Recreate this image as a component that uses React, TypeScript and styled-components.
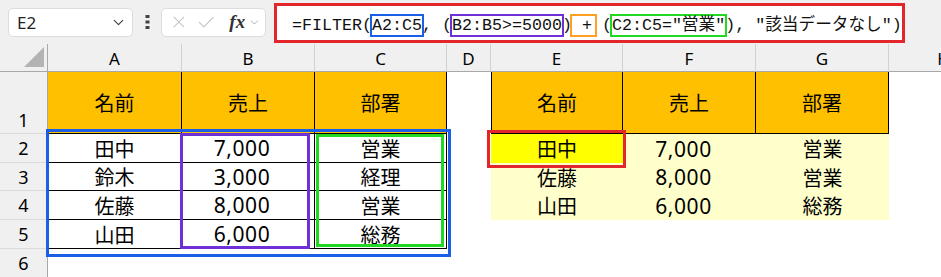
import styled, { createGlobalStyle } from "styled-components";
import { X, Check, ChevronDown } from "lucide-react";

const GlobalStyle = createGlobalStyle`
  body {
    margin: 0;
    background: #ffffff;
    overflow: hidden;
  }
  * {
    box-sizing: border-box;
  }
`;

const COLS = ["A", "B", "C", "D", "E", "F", "G", "H"];
const COL_W = [134, 133, 132, 44, 132, 133, 133, 110];
const ROW_H = [62, 29, 28, 29, 29, 29];

type CellData = {
    text?: string
    fill?: string
    border?: boolean
    left?: boolean
    num?: boolean
};

const ORANGE = "#ffc000";
const CREAM = "#ffffcc";
const YELLOW = "#ffff00";

const head = (t: string, left = false): CellData => ({ text: t, fill: ORANGE, border: true, left });
const body = (t: string, num = false): CellData => ({ text: t, border: true, num });
const out = (t: string, num = false, fill = CREAM): CellData => ({ text: t, fill, num });

// rows 1..6, columns A..H
const SHEET: CellData[][] = [
    [head("名前"), head("売上"), head("部署"), {}, head("名前", true), head("売上"), head("部署"), {}],
    [body("田中"), body("7,000", true), body("営業"), {}, out("田中", false, YELLOW), out("7,000", true), out("営業"), {}],
    [body("鈴木"), body("3,000", true), body("経理"), {}, out("佐藤"), out("8,000", true), out("営業"), {}],
    [body("佐藤"), body("8,000", true), body("営業"), {}, out("山田"), out("6,000", true), out("総務"), {}],
    [body("山田"), body("6,000", true), body("総務"), {}, {}, {}, {}, {}],
    [{}, {}, {}, {}, {}, {}, {}, {}],
];

export default function App() {
    return (
        <Page>
            <GlobalStyle />
            <Toolbar>
                <NameBox>
                    <span>E2</span>
                    <ChevronDown size={17} strokeWidth={1.6} color="#3a3a3a" />
                </NameBox>
                <Dots>
                    <svg width="5" height="16" viewBox="0 0 5 16">
                        <rect x="0.5" y="1" width="4" height="3" fill="#444" />
                        <rect x="0.5" y="6.5" width="4" height="3" fill="#444" />
                        <rect x="0.5" y="12" width="4" height="3" fill="#444" />
                    </svg>
                </Dots>
                <FxBox>
                    <X size={20} strokeWidth={1.3} color="#c4c4c4" />
                    <Check size={21} strokeWidth={1.3} color="#c4c4c4" />
                    <Fx>fx</Fx>
                    <ChevronDown size={13} strokeWidth={1.5} color="#9a9a9a" />
                </FxBox>
                <FormulaBox>
                    <Formula>
                        =FILTER(<Ref $color="#1a5fe6">A2:C5</Ref>, (<Ref $color="#7030d8">B2:B5&gt;=5000</Ref>)<Plus> +</Plus> (<Ref $color="#22d822">C2:C5="営業"</Ref>), "該当データなし")
                    </Formula>
                </FormulaBox>
            </Toolbar>

            <SheetWrap>
                <Grid>
                    <Corner>
                        <svg width="22" height="22" viewBox="0 0 22 22">
                            <polygon points="21,1 21,21 1,21" fill="#b3b3b3" />
                        </svg>
                    </Corner>
                    {COLS.map((c) => (
                        <ColHead key={c}>{c}</ColHead>
                    ))}
                    {SHEET.map((row, r) => (
                        <RowFrag key={r} row={row} n={r + 1} />
                    ))}
                </Grid>

                <Outline $color="#1a5fe6" $x={46} $y={85} $w={405} $h={128} />
                <Outline $color="#7030d8" $x={180} $y={89} $w={130} $h={116} />
                <Outline $color="#22d822" $x={316} $y={90} $w={128} $h={113} />
                <Outline $color="#e3262c" $x={487} $y={86} $w={139} $h={38} />
            </SheetWrap>
        </Page>
    )
}

function RowFrag({ row, n }: { row: CellData[]; n: number }) {
    return (
        <>
            <RowHead $bottom={n === 1}>{n}</RowHead>
            {row.map((c, i) => (
                <Cell key={i} $fill={c.fill} $border={c.border} $left={c.left} $num={c.num}>
                    {c.text}
                </Cell>
            ))}
        </>
    )
}

const Page = styled.div`
    width: 941px;
    height: 277px;
    overflow: hidden;
    background: #ffffff;
    font-family: "Noto Sans", "Noto Sans CJK JP", sans-serif;
    color: #000;
`

const Toolbar = styled.div`
    height: 44px;
    background: #f0f0f0;
    display: flex;
    align-items: center;
    padding-left: 8px;
`

const NameBox = styled.div`
    width: 125px;
    height: 29px;
    background: #ffffff;
    border: 1px solid #dcdcdc;
    border-radius: 5px;
    display: flex;
    align-items: center;
    justify-content: space-between;
    padding: 0 5px 0 8px;
    font-family: "Noto Sans", sans-serif;
    font-size: 17px;
    color: #222;
`

const Dots = styled.div`
    width: 28px;
    display: flex;
    justify-content: center;
    align-items: center;
`

const FxBox = styled.div`
    width: 105px;
    height: 29px;
    background: #ffffff;
    border: 1px solid #dcdcdc;
    border-radius: 5px;
    display: flex;
    align-items: center;
    gap: 7px;
    padding: 0 4px 0 7px;
`

const Fx = styled.span`
    font-family: "Liberation Serif", serif;
    font-style: italic;
    font-weight: bold;
    font-size: 19px;
    color: #333;
    margin-left: 6px;
    margin-right: -4px;
`

const FormulaBox = styled.div`
    margin-left: 8px;
    margin-top: 2px;
    width: 631px;
    height: 40px;
    background: #ffffff;
    border: 3px solid #e3262c;
    display: flex;
    align-items: center;
    padding-left: 15px;
`

const Formula = styled.div`
    font-family: "Liberation Mono", "Noto Sans CJK JP", monospace;
    font-size: 16.67px;
    color: #111;
    white-space: pre;
`

const Ref = styled.span<{ $color: string }>`
    border: 2px solid ${(p) => p.$color};
    margin: 0 -2px;
`

const Plus = styled.span`
    border: 2px solid #ffa020;
    margin: 0 -5px 0 -2px;
    padding-right: 3px;
`

const SheetWrap = styled.div`
    position: relative;
`

const Grid = styled.div`
    display: grid;
    grid-template-columns: 48px ${COL_W.map((w) => `${w}px`).join(" ")};
    grid-template-rows: 28px ${ROW_H.map((h) => `${h}px`).join(" ")};
`

const Corner = styled.div`
    background: #f0f0f0;
    border-right: 1px solid #a8a8a8;
    border-bottom: 1px solid #a8a8a8;
    display: flex;
    justify-content: flex-end;
    align-items: flex-end;
    padding: 0 2px 3px 0;
`

const ColHead = styled.div`
    background: #f0f0f0;
    border-right: 1px solid #d2d2d2;
    border-bottom: 1px solid #a8a8a8;
    display: flex;
    justify-content: center;
    align-items: center;
    font-size: 17px;
    padding-top: 2px;
    white-space: nowrap;
`

const RowHead = styled.div<{ $bottom?: boolean }>`
    background: #f0f0f0;
    border-right: 1px solid #a8a8a8;
    border-bottom: 1px solid #dadada;
    display: flex;
    justify-content: center;
    align-items: ${(p) => (p.$bottom ? "flex-end" : "center")};
    padding-bottom: ${(p) => (p.$bottom ? "1px" : "0")};
    font-size: 18px;
`

const Cell = styled.div<{ $fill?: string; $border?: boolean; $left?: boolean; $num?: boolean }>`
    background: ${(p) => p.$fill || "#ffffff"};
    border-right: ${(p) => (p.$border ? "1px solid #000" : "none")};
    border-bottom: ${(p) => (p.$border ? "1px solid #000" : "none")};
    border-left: ${(p) => (p.$left ? "1px solid #000" : "none")};
    display: flex;
    justify-content: center;
    align-items: center;
    font-size: ${(p) => (p.$num ? "21px" : "20px")};
    letter-spacing: ${(p) => (p.$num ? "0.6px" : "0")};
    padding-right: ${(p) => (p.$num ? "12px" : "0")};
    white-space: nowrap;
`

const Outline = styled.div<{ $color: string; $x: number; $y: number; $w: number; $h: number }>`
    position: absolute;
    left: ${(p) => p.$x}px;
    top: ${(p) => p.$y}px;
    width: ${(p) => p.$w}px;
    height: ${(p) => p.$h}px;
    border: 3px solid ${(p) => p.$color};
    pointer-events: none;
`
